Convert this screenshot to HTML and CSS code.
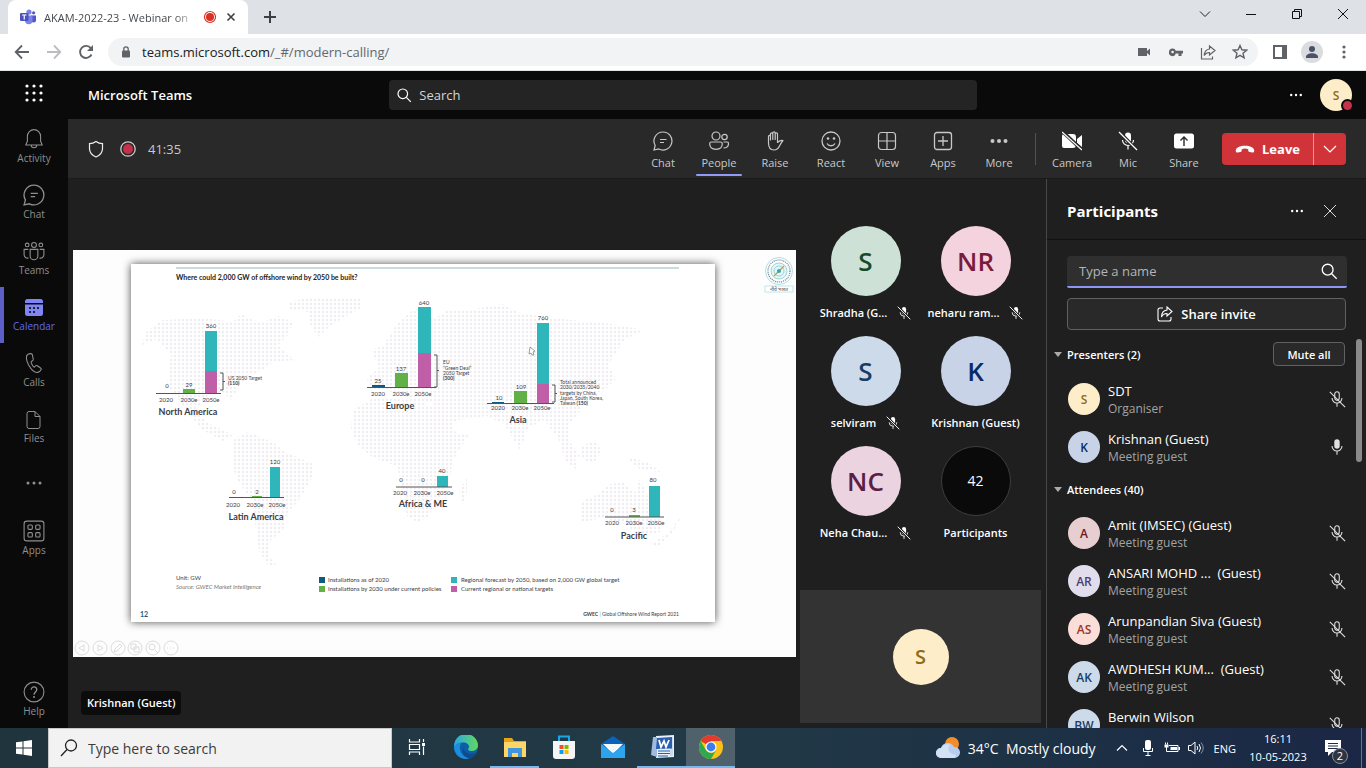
FILE: index.html
```html
<!DOCTYPE html>
<html lang="en">
<head>
    <meta charset="UTF-8">
    <meta name="viewport" content="width=device-width, initial-scale=1.0">
    <title>Microsoft Teams</title>
    <link rel="stylesheet" href="styles.css">
</head>
<body>
    <svg class="sprite" aria-hidden="true">
        <symbol id="mic-off" viewBox="0 0 20 20">
            <path d="M7 4.5a3 3 0 0 1 6 0V9a3 3 0 0 1-6 0z" fill="currentColor"/>
            <path d="M4.5 9a5.5 5.5 0 0 0 11 0M10 14.500v4" fill="none" stroke="currentColor" stroke-width="1.200"/>
            <path d="M1.500 1l17 18" stroke="#242424" stroke-width="3.500"/>
            <path d="M1 1l18 18" stroke="currentColor" stroke-width="1.300"/>
        </symbol>
        <symbol id="mic-off-line" viewBox="0 0 20 20">
            <g fill="none" stroke="currentColor" stroke-width="1.200">
                <path d="M7.500 4.500a2.500 2.500 0 0 1 5 0V9a2.500 2.500 0 0 1-5 0z"/>
                <path d="M4.500 9a5.500 5.500 0 0 0 11 0M10 14.500V18.500"/>
                <path d="M2 2l17 17"/>
            </g>
        </symbol>
        <symbol id="mic" viewBox="0 0 20 20">
            <path d="M7 4.500a3 3 0 0 1 6 0V9a3 3 0 0 1-6 0z" fill="currentColor"/>
            <path d="M4.500 9a5.500 5.500 0 0 0 11 0M10 14.500v4" fill="none" stroke="currentColor" stroke-width="1.200"/>
        </symbol>
        <symbol id="dots" viewBox="0 0 20 20">
            <g fill="currentColor"><circle cx="4" cy="10" r="1.500"/><circle cx="10" cy="10" r="1.500"/><circle cx="16" cy="10" r="1.500"/></g>
        </symbol>
        <symbol id="chat" viewBox="0 0 20 20">
            <path d="M10 1a9 9 0 1 1-4.200 17L1 19l1.200-4.500A9 9 0 0 1 10 1zM7 8.500h6.500M7 11.500h4" fill="none" stroke="currentColor" stroke-width="1.200"/>
        </symbol>
        <symbol id="search" viewBox="0 0 20 20">
            <circle cx="8.500" cy="8.500" r="6" fill="none" stroke="currentColor" stroke-width="1.500"/>
            <path d="M13 13l5.500 5.500" stroke="currentColor" stroke-width="1.500"/>
        </symbol>
    </svg>

    <div class="tab-strip">
        <div class="tab">
            <svg class="i16" viewBox="0 0 16 16">
                <circle cx="9" cy="3" r="2.600" fill="#7b83eb"/><circle cx="13.600" cy="3.800" r="1.600" fill="#5059c9"/>
                <path d="M11 6.500h5v4.500a2.500 2.500 0 0 1-5 0z" fill="#5059c9"/>
                <path d="M5 6.500h7.500v5.500a3.800 3.800 0 0 1-7.500 0z" fill="#7b83eb"/>
                <rect y="4" width="8.500" height="8" rx="1" fill="#4b53bc"/>
                <path d="M2 6h4.500M4.250 6v4.500" stroke="#fff" stroke-width="1.200"/>
            </svg>
            <span class="tab-title">AKAM-2022-23 - Webinar on</span>
            <svg class="i14" viewBox="0 0 14 14"><circle cx="7" cy="7" r="5.500" fill="none" stroke="#d93025" stroke-width="1.200"/><circle cx="7" cy="7" r="4" fill="#d93025"/></svg>
            <button class="plain tab-close" aria-label="Close tab"><svg class="i10" viewBox="0 0 10 10"><path d="M1.500 1.500l7 7m0-7l-7 7" stroke="#3c4043" stroke-width="1.600"/></svg></button>
        </div>
        <button class="plain new-tab" aria-label="New tab"><svg class="i14" viewBox="0 0 14 14"><path d="M7 1v12M1 7h12" stroke="#3c4043" stroke-width="2"/></svg></button>
        <div class="window-controls">
            <button class="plain" aria-label="Search tabs"><svg class="i12" viewBox="0 0 12 12"><path d="M1 3.500l5 5 5-5" fill="none" stroke="#222"/></svg></button>
            <button class="plain" aria-label="Minimize"><svg class="i12" viewBox="0 0 12 12"><path d="M1 6.500h10" stroke="#111"/></svg></button>
            <button class="plain" aria-label="Restore"><svg class="i12" viewBox="0 0 12 12"><path d="M1.500 3.500h7v7h-7zM3.500 3.500v-2h7v7h-2" fill="none" stroke="#111"/></svg></button>
            <button class="plain" aria-label="Close"><svg class="i12" viewBox="0 0 12 12"><path d="M1 1l10 10M11 1L1 11" stroke="#111"/></svg></button>
        </div>
    </div>

    <div class="browser-bar">
        <button class="plain nav" aria-label="Back"><svg class="i16" viewBox="0 0 16 16"><path d="M15 8H2M8 1.500L1.700 8 8 14.500" fill="none" stroke="#5f6368" stroke-width="1.800"/></svg></button>
        <button class="plain nav" aria-label="Forward"><svg class="i16" viewBox="0 0 16 16"><path d="M1 8h13M8 1.500L14.300 8 8 14.500" fill="none" stroke="#bbbdc0" stroke-width="1.800"/></svg></button>
        <button class="plain nav" aria-label="Reload"><svg class="i16" viewBox="0 0 16 16"><path d="M13.500 10.500A6 6 0 1 1 12.800 4.200" fill="none" stroke="#5f6368" stroke-width="1.900"/><path d="M15 1v6H9z" fill="#5f6368"/></svg></button>
        <div class="address">
            <svg class="i12" viewBox="0 0 12 12"><rect x="2" y="4.500" width="8" height="7" rx="1" fill="#5f6368"/><path d="M3.800 5V3a2.200 2.200 0 0 1 4.400 0v2" fill="none" stroke="#5f6368" stroke-width="1.300"/></svg>
            <span class="url">teams.microsoft.com<span>/_#/modern-calling/</span></span>
            <div class="address-icons">
                <svg class="i16" viewBox="0 0 16 16"><path d="M2 4h9v3l3-2.500v7L11 9v3H2z" fill="#5f6368"/></svg>
                <svg class="i16" viewBox="0 0 16 16"><path d="M1 8a3.500 3.500 0 0 1 6.800-1.200H15v2.800h-1.500V12h-3V9.600H7.800A3.500 3.500 0 0 1 1 8zm2.300 0a1.300 1.300 0 1 0 2.600 0 1.300 1.300 0 0 0-2.600 0z" fill="#5f6368"/></svg>
                <svg class="i16" viewBox="0 0 16 16"><path d="M1.500 4v11h11v-2.500M9.500 5V2l5.500 4.500-5.500 4.500V8.500C7 8.500 5.500 9.500 4.200 11.500 4.500 7.500 6.500 5.300 9.500 5z" fill="none" stroke="#5f6368" stroke-width="1.200"/></svg>
                <svg class="i16" viewBox="0 0 16 16"><path d="M8 1.500l1.900 4.300 4.700.4-3.600 3 1.100 4.600L8 11.400l-4.100 2.400L5 9.200l-3.600-3 4.700-.4z" fill="none" stroke="#5f6368" stroke-width="1.400"/></svg>
            </div>
        </div>
        <div class="browser-icons">
            <svg class="i16" viewBox="0 0 16 16"><path d="M2 2h12v12H2z" fill="none" stroke="#5f6368" stroke-width="2"/><path d="M10 2h4v12h-4z" fill="#5f6368"/></svg>
            <svg class="i22" viewBox="0 0 22 22"><circle cx="11" cy="11" r="11" fill="#dadce0"/><circle cx="11" cy="8" r="3" fill="#4a5269"/><path d="M5 17v-1c0-5 12-5 12 0v1z" fill="#4a5269"/></svg>
            <svg class="i16" viewBox="0 0 16 16"><g fill="#5f6368"><circle cx="8" cy="3" r="1.600"/><circle cx="8" cy="8" r="1.600"/><circle cx="8" cy="13" r="1.600"/></g></svg>
        </div>
    </div>

    <header class="app-header">
        <div class="app-brand">
            <button class="plain waffle" aria-label="Apps"><svg class="i20" viewBox="0 0 20 20"><g fill="#fff"><circle cx="3" cy="3" r="1.600"/><circle cx="10" cy="3" r="1.600"/><circle cx="17" cy="3" r="1.600"/><circle cx="3" cy="10" r="1.600"/><circle cx="10" cy="10" r="1.600"/><circle cx="17" cy="10" r="1.600"/><circle cx="3" cy="17" r="1.600"/><circle cx="10" cy="17" r="1.600"/><circle cx="17" cy="17" r="1.600"/></g></svg></button>
            <span class="brand">Microsoft Teams</span>
        </div>
        <label class="app-search">
            <svg class="i16"><use href="#search"/></svg>
            <input type="text" placeholder="Search" aria-label="Search">
        </label>
        <div class="app-user">
            <button class="plain" aria-label="Settings"><svg class="i16"><use href="#dots"/></svg></button>
            <div class="avatar cream">S<span class="status"></span></div>
        </div>
    </header>

    <div class="app-body">
        <nav class="rail">
            <a href="#"><svg class="i22" viewBox="0 0 20 20"><path d="M10 1.500a6 6 0 0 0-6 6V12l-1.500 3.500h15L16 12V7.500a6 6 0 0 0-6-6zM7.500 15.500a2.500 2.500 0 0 0 5 0" fill="none" stroke="currentColor" stroke-linejoin="round"/></svg>Activity</a>
            <a href="#"><svg class="i22"><use href="#chat"/></svg>Chat</a>
            <a href="#"><svg class="i22" viewBox="0 0 20 20"><g fill="none" stroke="currentColor"><circle cx="10" cy="4.500" r="2.200"/><circle cx="3.800" cy="4.500" r="1.700"/><circle cx="16.200" cy="4.500" r="1.700"/><path d="M6.500 8.500h7v6a3.500 3.500 0 0 1-7 0zM4.800 8.500H1v5a3 3 0 0 0 4 2.800M15.200 8.500H19v5a3 3 0 0 1-4 2.800"/></g></svg>Teams</a>
            <a href="#" class="active"><svg class="i20" viewBox="0 0 20 20"><path d="M1 5V3.500A2.500 2.500 0 0 1 3.500 1h13A2.500 2.500 0 0 1 19 3.500V5zM1 6.500h18v9a2.500 2.500 0 0 1-2.500 2.500h-13A2.500 2.500 0 0 1 1 15.500z" fill="#7f85f5"/><g fill="#0a0a0a"><circle cx="10" cy="10" r="1.100"/><circle cx="14" cy="10" r="1.100"/><circle cx="6" cy="10" r="1.100"/><circle cx="6" cy="14" r="1.100"/><circle cx="10" cy="14" r="1.100"/></g></svg>Calendar</a>
            <a href="#"><svg class="i22" viewBox="0 0 20 20"><path d="M6.500 1.500L4.500 2C2.500 3 2.500 7 5 11.500s6 7.500 8.500 7c1.500-.3 2.500-1.500 3-2.500.2-.7 0-1.200-.5-1.500l-3-2c-.6-.4-1.200-.2-1.600.2l-1 1c-.8.500-3.500-4-3-5l1.200-.7c.6-.3.800-.8.700-1.500L8.500 2.500c-.2-.8-1-1.200-2-1z" fill="none" stroke="currentColor"/></svg>Calls</a>
            <a href="#"><svg class="i20" viewBox="0 0 20 20"><path d="M5 1.500h6l5 5v10a2 2 0 0 1-2 2H5a2 2 0 0 1-2-2v-13a2 2 0 0 1 2-2zM11 1.500v5h5" fill="none" stroke="currentColor"/></svg>Files</a>
            <a href="#" class="more" aria-label="More"><svg class="i20"><use href="#dots"/></svg></a>
            <a href="#"><svg class="i22" viewBox="0 0 20 20"><g fill="none" stroke="currentColor"><rect x="1" y="1" width="18" height="18" rx="2.500"/><rect x="4.500" y="4.500" width="4" height="4" rx="1"/><rect x="11.500" y="4.500" width="4" height="4" rx="1"/><rect x="4.500" y="11.500" width="4" height="4" rx="1"/><rect x="11.500" y="11.500" width="4" height="4" rx="1"/></g></svg>Apps</a>
            <a href="#" class="help"><svg class="i22" viewBox="0 0 20 20"><g fill="none" stroke="currentColor"><circle cx="10" cy="10" r="9"/><path d="M7.500 8c0-3.500 5-3.500 5 0 0 2-2.500 2-2.500 4.500" stroke-width="1.200"/></g><circle cx="10" cy="14.500" r="0.900" fill="currentColor"/></svg>Help</a>
        </nav>

        <main class="meeting">
            <div class="call-bar">
                <svg class="i20 shield" viewBox="0 0 20 20"><path d="M10 2.500c2 1.500 4 2.200 6.500 2.200v5c0 4-2.500 6.500-6.500 8.300-4-1.800-6.500-4.300-6.500-8.300v-5C6 4.700 8 4 10 2.500z" fill="none" stroke="#eee" stroke-width="1.200"/></svg>
                <svg class="i16" viewBox="0 0 16 16"><circle cx="8" cy="8" r="7.200" fill="none" stroke="#ccc" stroke-width="1.300"/><circle cx="8" cy="8" r="5" fill="#c4314b"/></svg>
                <span class="timer">41:35</span>
                <div class="call-actions">
                    <button class="plain"><svg class="i20"><use href="#chat"/></svg>Chat</button>
                    <button class="plain selected"><svg class="i20" viewBox="0 0 20 20"><g fill="none" stroke="currentColor" stroke-width="1.200"><circle cx="7" cy="5" r="4"/><circle cx="15.500" cy="6" r="2.700"/><path d="M2.500 11h9a1.800 1.800 0 0 1 1.800 1.800c0 3.500-2.500 5.500-6.300 5.500S.7 16.300.7 12.800A1.800 1.800 0 0 1 2.500 11zM14.500 11H18a1.500 1.500 0 0 1 1.500 1.500c0 3-2 4.500-5 4.500"/></g></svg>People</button>
                    <button class="plain"><svg class="i20" viewBox="0 0 20 20"><path d="M3.500 12V5.500c0-1.500 2-1.500 2 0V9V3c0-1.500 2.300-1.500 2.300 0v5.500V2c0-1.500 2.400-1.500 2.400 0v6.500V3c0-1.500 2.300-1.500 2.300 0v8.500c1.500-1.500 3-2.500 5.500-2-1 1-2.500 3.500-3.500 5.500-1.200 2.500-2.800 4-5.500 4-3.500 0-5.500-2.500-5.500-7z" fill="none" stroke="currentColor" stroke-width="1.200" stroke-linejoin="round"/></svg>Raise</button>
                    <button class="plain"><svg class="i20" viewBox="0 0 20 20"><circle cx="10" cy="10" r="9" fill="none" stroke="currentColor" stroke-width="1.300"/><path d="M6 12.500c1.800 3 6.200 3 8 0" fill="none" stroke="currentColor" stroke-width="1.300"/><circle cx="7" cy="7.500" r="1.300" fill="currentColor"/><circle cx="13" cy="7.500" r="1.300" fill="currentColor"/></svg>React</button>
                    <button class="plain"><svg class="i20" viewBox="0 0 20 20"><path d="M10 1.500v17M1.500 10h17" stroke="currentColor" stroke-width="1.200"/><rect x="1.500" y="1.500" width="17" height="17" rx="3" fill="none" stroke="currentColor" stroke-width="1.200"/></svg>View</button>
                    <button class="plain"><svg class="i20" viewBox="0 0 20 20"><path d="M10 5v10M5 10h10" stroke="currentColor" stroke-width="1.300"/><rect x="1.500" y="1.500" width="17" height="17" rx="2.500" fill="none" stroke="currentColor" stroke-width="1.300"/></svg>Apps</button>
                    <button class="plain"><svg class="i20" viewBox="0 0 20 20"><g fill="currentColor"><circle cx="3.500" cy="10" r="2"/><circle cx="10" cy="10" r="2"/><circle cx="16.500" cy="10" r="2"/></g></svg>More</button>
                    <span class="divider"></span>
                    <button class="plain bright"><svg class="i20" viewBox="0 0 20 20"><path d="M0 5a2 2 0 0 1 2-2h9a3 3 0 0 1 3 3v8a3 3 0 0 1-3 3H2a2 2 0 0 1-2-2zM15 8l5-4v12l-5-4z" fill="currentColor"/><path d="M1 1l19 18" stroke="#292929" stroke-width="3.500"/><path d="M0 1l20 18" stroke="currentColor" stroke-width="1.300"/></svg>Camera</button>
                    <button class="plain bright"><svg class="i20"><use href="#mic-off"/></svg>Mic</button>
                    <button class="plain bright"><svg class="i20" viewBox="0 0 20 20"><rect y="2.500" width="20" height="15" rx="2.500" fill="currentColor"/><path d="M10 15V6M6.500 9.500L10 6l3.500 3.500" fill="none" stroke="#292929" stroke-width="1.400"/></svg>Share</button>
                    <div class="leave">
                        <button class="leave-main"><svg class="i20" viewBox="0 0 20 20"><path d="M.8 11.500C.5 5 19.500 5 19.200 11.500c0 1.500-.6 2.200-1.700 2l-3-.6c-.8-.2-1.200-.6-1.200-1.400v-1.300c-2-.8-4.600-.8-6.600 0v1.300c0 .8-.4 1.200-1.200 1.400l-3 .6c-1.100.2-1.700-.5-1.700-2z" fill="#fff"/></svg>Leave</button>
                        <button class="leave-more" aria-label="Leave options"><svg class="i14" viewBox="0 0 14 14"><path d="M1 4l6 6 6-6" fill="none" stroke="#fff" stroke-width="1.200"/></svg></button>
                    </div>
                </div>
            </div>

            <div class="call-content">
                <section class="stage">
                    <div class="shared">
                        <svg class="slide" viewBox="0 0 723 407" role="img" aria-label="Offshore wind slide">
                            <defs>
                                <pattern id="map-dots" width="4" height="4" patternUnits="userSpaceOnUse"><circle cx="2" cy="2" r="1.200" fill="#f0edf2"/></pattern>
                                <filter id="card-shadow" x="-5%" y="-5%" width="110%" height="110%"><feDropShadow dx="0" dy="0" stdDeviation="4" flood-color="#000" flood-opacity="0.700"/></filter>
                            </defs>
                            <rect width="723" height="407" fill="#fdfdfd"/>
                            <rect x="58" y="14" width="584" height="358" fill="#fff" filter="url(#card-shadow)"/>
                            <g fill="url(#map-dots)">
                                <path d="M73 82l17-12 40-2 30 4 8-8 12 6 10 2 15-6 15 6-5 13-10 10 17 15-22 2-10 8-15 6-10 12-7 12-8-8-15 3-12 16 12 12 25 12-10 6-22-12-20-26-14-18 4-30-14-16-15 6z"/>
                                <path d="M215 52l20-4 53 1v9l-18 10-15 10-10 9-7-11-3-14-20-3z"/>
                                <path d="M160 190l15-8 25 10 12 10 28 12v12l-14 24-11 12-5 18-12 10-3 15 8 10h-8l-9-14-3-20-4-30-14-20-6-16z"/>
                                <path d="M296 138l-2-10 12-10-8-18 12-4 14-22 16-14 20 10 15-10h22l32-6 20 10 50 6 40 4 32 6-20 10-6 10-10 15 8 14-12 12-20 4-4 16-12 15 2 16 10 14-8 4-14-22-14-18-16 8-8 22-16-26-18-8-28 4-14 10-12-28-14 4-16-12z"/>
                                <path d="M280 160l20-12 40 2 28 10 16 24h12l-16 26-4 22-10 18-12 18-10 4-10-6-4-26-6-24-24-8-16-14-6-16zM386 240l8-12v16l-5 10z"/>
                                <path d="M508 252l17-8 12-10 14-2 6 8 6 2 4-14 10 24 12 10-2 20-18 4-18-12-20-6-22 4zM484 184l10 6 8 18 2 12-12-10zM508 196l16-6 4 12-8 12-12-6zM550 206l24 6 14 10-20-2z"/>
                                <path d="M578 294l16-10 16-20-10 18-16 16z"/>
                            </g>
                            <path d="M103 18h503" stroke="#78a5a8" stroke-width="0.800"/>
                            <text class="slide-title" x="103" y="30">Where could 2,000 GW of offshore wind by 2050 be built?</text>

                            <g class="region">
                                <path class="forecast" d="M132 81h12v40h-12z"/><path class="target" d="M132 121h12v22h-12z"/><path class="policy" d="M110 139h12v4h-12z"/>
                                <path class="axis" d="M83 143.500h65"/><path class="brace" d="M147 123h3v17h-3M150 131.500h2"/>
                                <text x="94" y="138">0</text><text x="116" y="137">29</text><text x="138" y="78">360</text>
                                <text x="93" y="152">2020</text><text x="116" y="152">2030e</text><text x="138" y="152">2050e</text>
                                <text class="region-name" x="115" y="165">North America</text>
                                <text class="note" x="155" y="130">US 2050 Target</text><text class="note strong" x="155" y="135">(110)</text>
                            </g>
                            <g class="region">
                                <path class="forecast" d="M345 57h13v46h-13z"/><path class="target" d="M345 103h13v34h-13z"/><path class="policy" d="M322 123h13v14h-13z"/><path class="installed" d="M299 135h13v2h-13z"/>
                                <path class="axis" d="M294 137.500h69"/><path class="brace" d="M361 105h3v32h-3M364 120.500h2"/>
                                <text x="305" y="133">25</text><text x="328" y="121">137</text><text x="351" y="55">640</text>
                                <text x="305" y="146">2020</text><text x="328" y="146">2030e</text><text x="350" y="146">2050e</text>
                                <text class="region-name" x="327" y="159">Europe</text>
                                <text class="note" x="370" y="114">EU</text><text class="note" x="370" y="120">“Green Deal”</text><text class="note" x="370" y="125">2050 Target</text><text class="note strong" x="370" y="130">(300)</text>
                            </g>
                            <g class="region">
                                <path class="forecast" d="M464 73h12v61h-12z"/><path class="target" d="M464 134h12v19h-12z"/><path class="policy" d="M441 141h13v12h-13z"/><path class="installed" d="M419 152h12v1h-12z"/>
                                <path class="axis" d="M414 153.500h67"/><path class="brace" d="M479 135h3v17h-3M482 143.500h2"/>
                                <text x="426" y="150">10</text><text x="448" y="139">109</text><text x="470" y="70">760</text>
                                <text x="425" y="160">2020</text><text x="447" y="160">2030e</text><text x="469" y="160">2050e</text>
                                <text class="region-name" x="445" y="173">Asia</text>
                                <text class="note" x="487" y="134">Total announced</text><text class="note" x="487" y="139">2030/2035/2040</text><text class="note" x="487" y="145">targets by China,</text><text class="note" x="487" y="150">Japan, South Korea,</text><text class="note" x="487" y="155">Taiwan <tspan class="strong">(150)</tspan></text>
                            </g>
                            <g class="region">
                                <path class="forecast" d="M197 217h10v30h-10z"/><path class="policy" d="M179 246h10v1h-10z"/><path class="axis" d="M156 247.500h55"/>
                                <text x="161" y="244">0</text><text x="184" y="244">2</text><text x="202" y="214">120</text>
                                <text x="160" y="257">2020</text><text x="182" y="257">2030e</text><text x="204" y="257">2050e</text>
                                <text class="region-name" x="183" y="270">Latin America</text>
                            </g>
                            <g class="region">
                                <path class="forecast" d="M364 226h11v11h-11z"/><path class="axis" d="M323 237h56"/>
                                <text x="328" y="232">0</text><text x="350" y="232">0</text><text x="369" y="223">40</text>
                                <text x="327" y="245">2020</text><text x="349" y="245">2030e</text><text x="372" y="245">2050e</text>
                                <text class="region-name" x="350" y="257">Africa &amp; ME</text>
                            </g>
                            <g class="region">
                                <path class="forecast" d="M576 236h11v31h-11z"/><path class="policy" d="M556 265h11v2h-11z"/><path class="axis" d="M532 267h59"/>
                                <text x="539" y="262">0</text><text x="561" y="262">3</text><text x="580" y="232">80</text>
                                <text x="539" y="275">2020</text><text x="561" y="275">2030e</text><text x="583" y="275">2050e</text>
                                <text class="region-name" x="561" y="289">Pacific</text>
                            </g>

                            <g class="legend">
                                <text x="103" y="330">Unit: GW</text><text class="source" x="103" y="339">Source: GWEC Market Intelligence</text>
                                <path class="installed" d="M246 327h6v6h-6z"/><text x="255" y="332">Installations as of 2020</text>
                                <path class="policy" d="M246 336h6v6h-6z"/><text x="255" y="341">Installations by 2030 under current policies</text>
                                <path class="forecast" d="M378 327h6v6h-6z"/><text x="388" y="332">Regional forecast by 2050, based on 2,000 GW global target</text>
                                <path class="target" d="M378 336h6v6h-6z"/><text x="388" y="341">Current regional or national targets</text>
                                <text class="page-no" x="67" y="367">12</text>
                                <text class="report" x="606" y="366"><tspan class="strong">GWEC</tspan> <tspan fill="#2ab6bb">|</tspan> Global Offshore Wind Report 2021</text>
                            </g>
                            <path d="M457 97l5 4-2 1 1 3-2 0-1-2-2 1z" fill="#fff" stroke="#777" stroke-width="0.700"/>

                            <g fill="none" stroke="#9ad5de">
                                <circle cx="706" cy="21" r="13.500" stroke-width="0.800"/><circle cx="706" cy="21" r="11" stroke="#678" stroke-width="1.200" stroke-dasharray="1 1"/>
                                <circle cx="706" cy="21" r="8" fill="#e4f6f8"/><circle cx="706" cy="21" r="5"/>
                                <path d="M701 26l10-10" stroke="#c99c3b" stroke-width="1.300"/><circle cx="706" cy="21" r="2" fill="#35a4b5" stroke="none"/>
                                <rect x="692" y="36" width="28" height="6" fill="#fff" stroke-width="0.600"/>
                            </g>
                            <text class="logo-text" x="706" y="41">नीवे भारत</text>

                            <g class="slide-tools">
                                <circle cx="9" cy="398" r="7"/><circle cx="27" cy="398" r="7"/><circle cx="45" cy="398" r="7"/><circle cx="62" cy="398" r="7"/><circle cx="80" cy="398" r="7"/><circle cx="98" cy="398" r="7"/>
                                <path d="M11 395v6l-5-3zM25 395v6l5-3zM41 402l1-3 5-5 2 2-5 5zM58 394h5v5h-5zM61 397h5v5h-5zM82 400l3 3M94 398h1M97 398h1M100 398h1"/><circle cx="79" cy="397" r="3"/>
                            </g>
                        </svg>
                        <span class="presenter">Krishnan (Guest)</span>
                    </div>
                    <div class="side">
                        <div class="gallery">
                            <div class="person"><div class="avatar big green">S</div><div class="label">Shradha (G... <svg class="i14"><use href="#mic-off"/></svg></div></div>
                            <div class="person"><div class="avatar big pink">NR</div><div class="label">neharu ram... <svg class="i14"><use href="#mic-off"/></svg></div></div>
                            <div class="person"><div class="avatar big sky">S</div><div class="label">selviram <svg class="i14"><use href="#mic-off"/></svg></div></div>
                            <div class="person"><div class="avatar big blue">K</div><div class="label">Krishnan (Guest)</div></div>
                            <div class="person"><div class="avatar big plum">NC</div><div class="label">Neha Chau... <svg class="i14"><use href="#mic-off"/></svg></div></div>
                            <div class="person"><div class="avatar big count">42</div><div class="label">Participants</div></div>
                        </div>
                        <div class="self"><div class="avatar medium cream">S</div></div>
                    </div>
                </section>

                <aside class="panel">
                    <div class="panel-head">
                        <h2>Participants</h2>
                        <button class="plain" aria-label="More"><svg class="i16"><use href="#dots"/></svg></button>
                        <button class="plain" aria-label="Close"><svg class="i14" viewBox="0 0 14 14"><path d="M1 1l12 12M13 1L1 13" stroke="#ddd"/></svg></button>
                    </div>
                    <label class="name-box">
                        <input type="text" placeholder="Type a name" aria-label="Type a name">
                        <svg class="i18"><use href="#search"/></svg>
                    </label>
                    <button class="invite"><svg class="i16" viewBox="0 0 16 16"><path d="M6 2H3a2 2 0 0 0-2 2v9a2 2 0 0 0 2 2h9a2 2 0 0 0 2-2v-2M10 4V1l5 4.500L10 10V7.500C7 7.500 5.500 8.500 4.500 11c0-4 2-6.500 5.500-7z" fill="none" stroke="currentColor" stroke-width="1.100"/></svg>Share invite</button>
                    <div class="roster">
                        <span class="scroll-thumb"></span>
                        <div class="group presenters"><h3>Presenters (2)</h3><button class="mute-all">Mute all</button></div>
                        <ul>
                            <li><div class="avatar cream">S</div><div class="who">SDT<small>Organiser</small></div><svg class="i18"><use href="#mic-off-line"/></svg></li>
                            <li><div class="avatar blue">K</div><div class="who">Krishnan (Guest)<small>Meeting guest</small></div><svg class="i18"><use href="#mic"/></svg></li>
                        </ul>
                        <div class="group"><h3>Attendees (40)</h3></div>
                        <ul>
                            <li><div class="avatar rose">A</div><div class="who">Amit (IMSEC) (Guest)<small>Meeting guest</small></div><svg class="i18"><use href="#mic-off-line"/></svg></li>
                            <li><div class="avatar lilac">AR</div><div class="who">ANSARI MOHD ...&nbsp; (Guest)<small>Meeting guest</small></div><svg class="i18"><use href="#mic-off-line"/></svg></li>
                            <li><div class="avatar peach">AS</div><div class="who">Arunpandian Siva (Guest)<small>Meeting guest</small></div><svg class="i18"><use href="#mic-off-line"/></svg></li>
                            <li><div class="avatar sky">AK</div><div class="who">AWDHESH KUM...&nbsp; (Guest)<small>Meeting guest</small></div><svg class="i18"><use href="#mic-off-line"/></svg></li>
                            <li><div class="avatar sky">BW</div><div class="who">Berwin Wilson<small>&nbsp;</small></div><svg class="i18"><use href="#mic-off-line"/></svg></li>
                        </ul>
                    </div>
                </aside>
            </div>
        </main>
    </div>

    <footer class="taskbar">
        <button class="plain start" aria-label="Start"><svg class="i16" viewBox="0 0 16 16"><path d="M0 2.300l6.500-.9v6.100H0zM7.500 1.200L16 0v7.500H7.500zM0 8.500h6.500v6.100L0 13.700zM7.500 8.500H16V16l-8.500-1.200z" fill="#fff"/></svg></button>
        <label class="task-search">
            <svg class="i18" viewBox="0 0 18 18"><circle cx="11" cy="6.500" r="5.500" fill="none" stroke="#222" stroke-width="1.300"/><path d="M7 10.500l-6 6.500" stroke="#222" stroke-width="1.300"/></svg>
            <input type="text" placeholder="Type here to search" aria-label="Type here to search">
        </label>
        <div class="task-apps">
            <button class="plain" aria-label="Task View"><svg class="i18" viewBox="0 0 18 18"><path d="M1.500 1v3h10V1M1.500 17v-3h10v3M1.500 6.500h10v5h-10zM15.500 1v3M15.500 8.500V17" fill="none" stroke="#fff" stroke-width="1.200"/><rect x="14" y="5" width="3" height="3" fill="#fff"/></svg></button>
            <button class="plain" aria-label="Edge"><svg class="i24" viewBox="0 0 24 24"><defs><linearGradient id="edge-top" x2="1"><stop stop-color="#2aa7e5"/><stop offset="1" stop-color="#62d95b"/></linearGradient></defs><circle cx="12" cy="12" r="12" fill="#0d5ea8"/><path d="M0 12A12 12 0 0 1 24 10c0 4-3 6-6.500 6-3 0-4-1.500-2.800-3 1.200-2-1-5.500-5-5.500C5 7.500 1 10 0 12z" fill="url(#edge-top)"/><path d="M0 12c1-3 4-4.500 7.500-4.500C4 12 6 21 15 23.600 5 25.500 0 18 0 12z" fill="#1c8ddc"/><path d="M9.500 11C8 16 14 21 22.500 17.500c-1.500 3-4 5-6.500 5.800C9 22 7 16 9.500 11z" fill="#114a8b"/></svg></button>
            <button class="plain open" aria-label="File Explorer"><svg class="i24" viewBox="0 0 24 24"><path d="M1 3h8l2 3h12v16H1z" fill="#e8a317"/><path d="M1 7h22v15H1z" fill="#fdd667"/><path d="M5 13h14v9h-4v-4H9v4H5z" fill="#3f96dc"/></svg></button>
            <button class="plain" aria-label="Store"><svg class="i24" viewBox="0 0 24 24"><path d="M7 6V1.500h10V6" fill="none" stroke="#1ba8e8" stroke-width="2"/><path d="M1 6h22v15a3 3 0 0 1-3 3H4a3 3 0 0 1-3-3z" fill="#f5f5f5"/><path d="M7.500 10h4v4h-4z" fill="#f25022"/><path d="M12.500 10h4v4h-4z" fill="#7fba00"/><path d="M7.500 15h4v4h-4z" fill="#00a4ef"/><path d="M12.500 15h4v4h-4z" fill="#ffb900"/></svg></button>
            <button class="plain" aria-label="Mail"><svg class="i24" viewBox="0 0 24 24"><path d="M0 9l12-8 12 8v14H0z" fill="#0a63b8"/><path d="M2 9h20L12 19z" fill="#fff"/><path d="M0 9l12 9 12-9v14H0z" fill="#2ea4ef"/><path d="M3 9h18l-9 8z" fill="#f4f8fb"/></svg></button>
            <button class="plain open" aria-label="Word"><svg class="i24" viewBox="0 0 24 24"><path d="M6 1l18-1v22l-18 1z" fill="#e9f0fa"/><path d="M20 2h3v19h-3z" fill="#c9d9ee"/><path d="M3 2h4v20L1 20z" fill="#9fbce0"/><path d="M8 16h12M8 18.500h12M8 21h10" stroke="#2a5fae"/><path d="M7 3l15-1v11.500L6 14z" fill="#2a5fae"/><path d="M9 5l2 7 3-6 2 6 3-7" fill="none" stroke="#fff" stroke-width="1.800"/></svg></button>
            <button class="plain open current" aria-label="Chrome"><svg class="i24" viewBox="0 0 24 24"><circle cx="12" cy="12" r="12" fill="#fbc116"/><path d="M12 12L1.600 6A12 12 0 0 1 22.400 6H12z" fill="#e33b2e"/><path d="M1.600 6L6.800 15a6 6 0 0 0 5.200 3l-1.200 6A12 12 0 0 1 1.600 6z" fill="#2da94f"/><path d="M6.800 15a6 6 0 0 0 10.400 0L12 24h-1.500z" fill="#2da94f"/><circle cx="12" cy="12" r="5.600" fill="#fff"/><circle cx="12" cy="12" r="4.400" fill="#3b7ded"/></svg></button>
        </div>
        <div class="tray">
            <svg class="i24" viewBox="0 0 24 24"><circle cx="16" cy="8" r="7" fill="#f28c28"/><path d="M5 22a5 5 0 0 1 0-10 7 7 0 0 1 13-1 5.500 5.500 0 0 1 1 11z" fill="#b7cdee"/><path d="M5 22a5 5 0 0 1 0-10 7 7 0 0 1 9-3c-4 5 0 9 6 10-.5 2-1 3-2 3z" fill="#d3e1f7"/></svg>
            <span class="weather">34°C&nbsp; Mostly cloudy</span>
            <svg class="i12 up" viewBox="0 0 12 12"><path d="M1 8.500l5-5 5 5" fill="none" stroke="#fff" stroke-width="1.200"/></svg>
            <svg class="i16" viewBox="0 0 16 16"><rect x="5" width="6" height="10" rx="2" fill="#fff"/><path d="M3.500 8v3.500h9V8M8 12v3M5.500 15.500h5" fill="none" stroke="#fff"/></svg>
            <svg class="i16" viewBox="0 0 16 16"><path d="M5 5.500h9v6H4.500" fill="none" stroke="#fff"/><path d="M6.500 7H13v3H6.500zM14.500 7H16v3h-1.500zM.5 4.500h4v3h-4z" fill="#fff"/><path d="M1.500 2.500v2M3.500 2.500v2M2.500 7v4.500h3" stroke="#fff" fill="none"/></svg>
            <svg class="i16" viewBox="0 0 16 16"><path d="M.5 5.500h2.500l4-3.500v12l-4-3.500H.5z" fill="none" stroke="#fff"/><path d="M9 6q1.500 2 0 4M11 4q3 4 0 8" fill="none" stroke="#fff"/><path d="M13 2.500q4.500 5.500 0 11" fill="none" stroke="#8791a5"/></svg>
            <span class="lang">ENG</span>
            <time class="clock">16:11<br>10-05-2023</time>
            <div class="notice"><svg class="i18" viewBox="0 0 18 18"><path d="M1 1h16v12H8l-4 4v-4H1z" fill="#fff"/><path d="M4 4.500h10M4 7h10M4 9.500h10" stroke="#1e2c46"/></svg><span>2</span></div>
        </div>
    </footer>
</body>
</html>
```
FILE: styles.css
```css
* {
    box-sizing: border-box;
}

body {
    margin: 0;
    height: 100vh;
    display: flex;
    flex-direction: column;
    overflow: hidden;
    background: #0a0a0a;
    color: #fff;
    font-family: 'Segoe UI', 'Open Sans', sans-serif;
    font-size: 13px;
}

svg {
    display: block;
    flex: none;
}

button, input {
    font: inherit;
    color: inherit;
}

button {
    padding: 0;
}

.sprite {
    position: absolute;
    width: 0;
    height: 0;
}

.plain {
    border: 0;
    background: none;
    display: flex;
    align-items: center;
    justify-content: center;
}

.i10 { width: 10px; height: 10px; }
.i12 { width: 12px; height: 12px; }
.i14 { width: 14px; height: 14px; }
.i16 { width: 16px; height: 16px; }
.i18 { width: 18px; height: 18px; }
.i20 { width: 20px; height: 20px; }
.i22 { width: 22px; height: 22px; }
.i24 { width: 24px; height: 24px; }

/* browser */
.tab-strip {
    height: 34px;
    flex: none;
    display: flex;
    padding-left: 8px;
    background: #dee1e6;
}

.tab {
    width: 240px;
    display: flex;
    align-items: center;
    padding: 0 9px 0 12px;
    background: #fff;
    border-radius: 8px 8px 0 0;
    color: #45494d;
    font-size: 11px;
}

.tab-title {
    flex: 1;
    margin: 0 6px 0 8px;
    overflow: hidden;
    white-space: nowrap;
    mask-image: linear-gradient(90deg, #000 85%, transparent);
}

.tab-close {
    width: 16px;
    height: 16px;
    margin-left: 6px;
}

.new-tab {
    width: 44px;
}

.window-controls {
    display: flex;
    height: 28px;
    margin-left: auto;
}

.window-controls button {
    width: 46px;
}

.browser-bar {
    height: 37px;
    flex: none;
    display: flex;
    align-items: center;
    padding: 0 6px;
    background: #fff;
    border-bottom: 1px solid #dfe5df;
}

.nav {
    width: 32px;
    height: 32px;
}

.address {
    flex: 1;
    height: 28px;
    display: flex;
    align-items: center;
    gap: 10px;
    margin-left: 6px;
    padding: 0 10px 0 12px;
    background: #f1f3f4;
    border-radius: 14px;
}

.url {
    color: #202124;
    font-size: 13px;
}

.url span {
    color: #64686d;
}

.address-icons {
    display: flex;
    gap: 16px;
    margin-left: auto;
}

.browser-icons {
    display: flex;
    align-items: center;
    gap: 13px;
    padding: 0 8px 0 14px;
}

/* teams header */
.app-header {
    height: 48px;
    flex: none;
    display: grid;
    grid-template-columns: 1fr 43vw 1fr;
    align-items: center;
}

.app-brand, .app-user {
    display: flex;
    align-items: center;
}

.waffle {
    width: 68px;
    margin-bottom: 4px;
}

.brand {
    margin-left: 20px;
    font-weight: 600;
    font-size: 13px;
}

.app-search {
    height: 30px;
    display: flex;
    align-items: center;
    padding: 0 7px;
    background: #242424;
    border-radius: 4px;
}

.app-search input {
    flex: 1;
    margin-left: 7px;
    padding: 0;
    border: 0;
    outline: 0;
    background: none;
    font-size: 13px;
}

.app-search input::placeholder {
    color: #d6d6d6;
}

.app-user {
    justify-content: flex-end;
    gap: 16px;
    padding-right: 14px;
}

.avatar {
    position: relative;
    width: 32px;
    height: 32px;
    flex: none;
    display: flex;
    align-items: center;
    justify-content: center;
    border-radius: 50%;
    font-size: 12px;
    font-weight: 600;
}

.avatar.medium {
    width: 56px;
    height: 56px;
    font-size: 20px;
}

.avatar.big {
    width: 70px;
    height: 70px;
    font-size: 26px;
}

.status {
    position: absolute;
    right: -2px;
    bottom: -1px;
    width: 13px;
    height: 13px;
    border: 2px solid #0a0a0a;
    border-radius: 50%;
    background: #c4314b;
}

.cream { background: #fdeec9; color: #8f6a15; }
.green { background: #cee1d6; color: #134a2b; }
.pink { background: #f5d3de; color: #791b3b; }
.sky { background: #cddaea; color: #173c66; }
.blue { background: #c8d3e7; color: #092b65; }
.plum { background: #ebd3e0; color: #5c1d46; }
.rose { background: #e7ced1; color: #6c1722; }
.lilac { background: #e2dded; color: #4c3d74; }
.peach { background: #fcded8; color: #9b3724; }

.avatar.count {
    background: #0a0a0a;
    border: 1px solid #3d3d3d;
    color: #fff;
    font-size: 14px;
    font-weight: 400;
}

.app-body {
    flex: 1;
    min-height: 0;
    display: flex;
}

.rail {
    width: 68px;
    display: flex;
    flex-direction: column;
}

.rail a {
    height: 56px;
    display: flex;
    flex-direction: column;
    align-items: center;
    justify-content: flex-end;
    gap: 1px;
    padding-bottom: 10px;
    color: #8f8f8f;
    font-size: 10px;
    line-height: 14px;
    text-decoration: none;
}

.rail a.active {
    color: #6169f5;
    border-left: 4px solid #5b5fc7;
    padding-right: 4px;
}

.rail a.more {
    padding-bottom: 18px;
}

.rail a.help {
    margin-top: auto;
}

/* call */
.meeting {
    flex: 1;
    min-width: 0;
    display: flex;
    flex-direction: column;
    background: #1f1f1f;
}

.call-bar {
    height: 60px;
    flex: none;
    display: flex;
    align-items: center;
    padding: 0 20px 0 18px;
    background: #292929;
    border-bottom: 1px solid #1a1a1a;
}

.shield {
    margin-right: 14px;
}

.timer {
    margin-left: 12px;
    color: #c8c8c8;
}

.call-actions {
    height: 100%;
    display: flex;
    align-items: center;
    margin-left: auto;
}

.call-actions > button {
    position: relative;
    width: 56px;
    height: 59px;
    flex-direction: column;
    gap: 4px;
    padding-top: 4px;
    color: #c8c8c8;
    font-size: 11px;
    line-height: 16px;
}

.call-actions > .bright svg {
    color: #fff;
}

.selected::after {
    content: "";
    position: absolute;
    left: 5px;
    right: 5px;
    bottom: 2px;
    height: 2px;
    background: #9299f7;
    border-radius: 1px;
}

.divider {
    width: 1px;
    height: 32px;
    margin: 0 8px;
    background: #525252;
}

.leave {
    display: flex;
    height: 32px;
    margin-left: 10px;
    border-radius: 4px;
    overflow: hidden;
}

.leave button {
    display: flex;
    align-items: center;
    justify-content: center;
    gap: 7px;
    border: 0;
    background: #d13438;
    font-weight: 700;
}

.leave-main {
    width: 91px;
}

.leave .leave-more {
    width: 33px;
    border-left: 1px solid #e79a9c;
}

.call-content {
    flex: 1;
    min-height: 0;
    display: flex;
}

.stage {
    flex: 1;
    min-width: 0;
    display: flex;
    gap: 4px;
    padding: 0 5px;
}

.shared {
    position: relative;
    flex: 1;
    min-width: 0;
    display: flex;
    align-items: center;
}

.slide {
    width: 100%;
    height: auto;
    flex: 1;
}

.presenter {
    position: absolute;
    left: 8px;
    bottom: 13px;
    padding: 3px 6px;
    border-radius: 4px;
    background: #0c0c0c;
    font-size: 11px;
    font-weight: 600;
    line-height: 18px;
}

.side {
    width: 241px;
    display: flex;
    flex-direction: column;
    padding-bottom: 5px;
}

.gallery {
    flex: 1;
    display: grid;
    grid-template-columns: 110px 110px;
    grid-auto-rows: 110px;
    align-content: center;
    justify-content: center;
}

.person {
    display: flex;
    flex-direction: column;
    align-items: center;
    gap: 7px;
    padding-top: 6px;
}

.label {
    display: flex;
    align-items: center;
    gap: 10px;
    font-size: 11px;
    font-weight: 600;
    line-height: 20px;
    white-space: nowrap;
}

.self {
    height: 133px;
    display: flex;
    align-items: center;
    justify-content: center;
    background: #333;
}

/* participants */
.panel {
    width: 320px;
    flex: none;
    display: flex;
    flex-direction: column;
    border-left: 1px solid #484848;
}

.panel-head {
    height: 61px;
    flex: none;
    display: flex;
    align-items: center;
    gap: 18px;
    padding: 4px 29px 0 20px;
    border-bottom: 1px solid #111;
}

.panel-head h2 {
    flex: 1;
    margin: 0;
    font-size: 15px;
    font-weight: 700;
}

.name-box {
    height: 32px;
    flex: none;
    display: flex;
    align-items: center;
    margin: 16px 19px 10px 20px;
    padding: 0 9px 0 12px;
    background: #2f2f2f;
    border-bottom: 2px solid #8f95f4;
    border-radius: 4px 4px 2px 2px;
}

.name-box input {
    flex: 1;
    min-width: 0;
    padding: 0;
    border: 0;
    outline: 0;
    background: none;
}

.name-box input::placeholder {
    color: #b5b5b5;
}

.invite {
    height: 32px;
    flex: none;
    display: flex;
    align-items: center;
    justify-content: center;
    gap: 8px;
    margin: 0 20px;
    border: 1px solid #616161;
    border-radius: 4px;
    background: #292929;
    font-weight: 600;
}

.roster {
    position: relative;
    flex: 1;
    min-height: 0;
    overflow: hidden;
    padding-top: 5px;
}

.scroll-thumb {
    position: absolute;
    top: 9px;
    right: 4px;
    width: 6px;
    height: 123px;
    border-radius: 3px;
    background: #8a8a8a;
}

.group {
    height: 38px;
    display: flex;
    align-items: center;
    justify-content: space-between;
    padding: 0 21px 2px 7px;
}

.group.presenters {
    height: 40px;
}

.group h3 {
    display: flex;
    align-items: center;
    gap: 5px;
    margin: 0;
    font-size: 11px;
    font-weight: 600;
}

.group h3::before {
    content: "";
    border: 4px solid transparent;
    border-top: 5px solid #aaa;
    border-bottom: 0;
}

.mute-all {
    width: 72px;
    height: 24px;
    border: 1px solid #616161;
    border-radius: 4px;
    background: #292929;
    font-size: 11px;
    font-weight: 600;
}

.roster ul {
    margin: 0;
    padding: 0;
    list-style: none;
}

.roster li {
    height: 48px;
    display: flex;
    align-items: center;
    gap: 8px;
    padding: 0 20px 0 21px;
}

.roster li > svg {
    color: #e0e0e0;
}

.who {
    flex: 1;
    padding-top: 2px;
    line-height: 18px;
    white-space: nowrap;
}

.who small {
    display: block;
    color: #a3a3a3;
    font-size: 12px;
    line-height: 18px;
}

/* taskbar */
.taskbar {
    height: 40px;
    flex: none;
    display: flex;
    background: linear-gradient(90deg, #20343d, #223a47 50%, #1d3245 75%, #1b2745);
}

.start {
    width: 48px;
}

.task-search {
    width: 344px;
    display: flex;
    align-items: center;
    gap: 10px;
    padding: 0 11px;
    background: #f2f2f2;
    border: 1px solid #c8c8c8;
}

.task-search input {
    flex: 1;
    padding: 0;
    border: 0;
    outline: 0;
    background: none;
    font-size: 14px;
}

.task-search input::placeholder {
    color: #3c3c3c;
}

.task-apps {
    display: flex;
}

.task-apps button {
    width: 49px;
    border-bottom: 2px solid transparent;
}

.task-apps .open {
    border-bottom-color: #76b9ed;
}

.task-apps .current {
    background: #4f626c;
}

.tray {
    display: flex;
    align-items: center;
    gap: 8px;
    margin-left: auto;
    padding-right: 4px;
}

.weather {
    font-size: 14px;
}

.up {
    margin: 0 4px 0 12px;
}

.lang {
    margin-left: 2px;
    font-size: 11px;
}

.clock {
    width: 68px;
    font-size: 11px;
    line-height: 18px;
    text-align: center;
}

.notice {
    position: relative;
    width: 42px;
    height: 40px;
    display: flex;
    align-items: center;
    padding-left: 4px;
    border-right: 1px solid #68748a;
}

.notice span {
    position: absolute;
    left: 12px;
    bottom: 4px;
    width: 16px;
    height: 16px;
    border: 1px solid #8a8f99;
    border-radius: 50%;
    background: #2f3440;
    font-size: 11px;
    line-height: 14px;
    text-align: center;
}

/* shared slide */
.slide text {
    font-family: Lato, sans-serif;
    font-size: 6px;
    fill: #3c3c44;
}

.slide .slide-title {
    font-size: 7px;
    font-weight: 700;
    fill: #222;
}

.region text {
    text-anchor: middle;
}

.slide .region-name {
    font-size: 9px;
    font-weight: 700;
}

.slide .note {
    text-anchor: start;
    font-size: 5px;
}

.strong {
    font-weight: 700;
}

.forecast { fill: #2fb6bb; }
.target { fill: #c05fa8; }
.policy { fill: #62b146; }
.installed { fill: #0f5a80; }

.axis {
    stroke: #555;
}

.brace {
    fill: none;
    stroke: #555;
}

.slide .source {
    font-style: italic;
    fill: #777;
}

.slide .page-no {
    font-size: 7px;
    font-weight: 700;
    fill: #165c84;
}

.slide .report {
    font-size: 5px;
    text-anchor: end;
}

.slide .logo-text {
    font-size: 5px;
    text-anchor: middle;
}

.slide-tools {
    fill: none;
    stroke: #dcdcdc;
}
```
